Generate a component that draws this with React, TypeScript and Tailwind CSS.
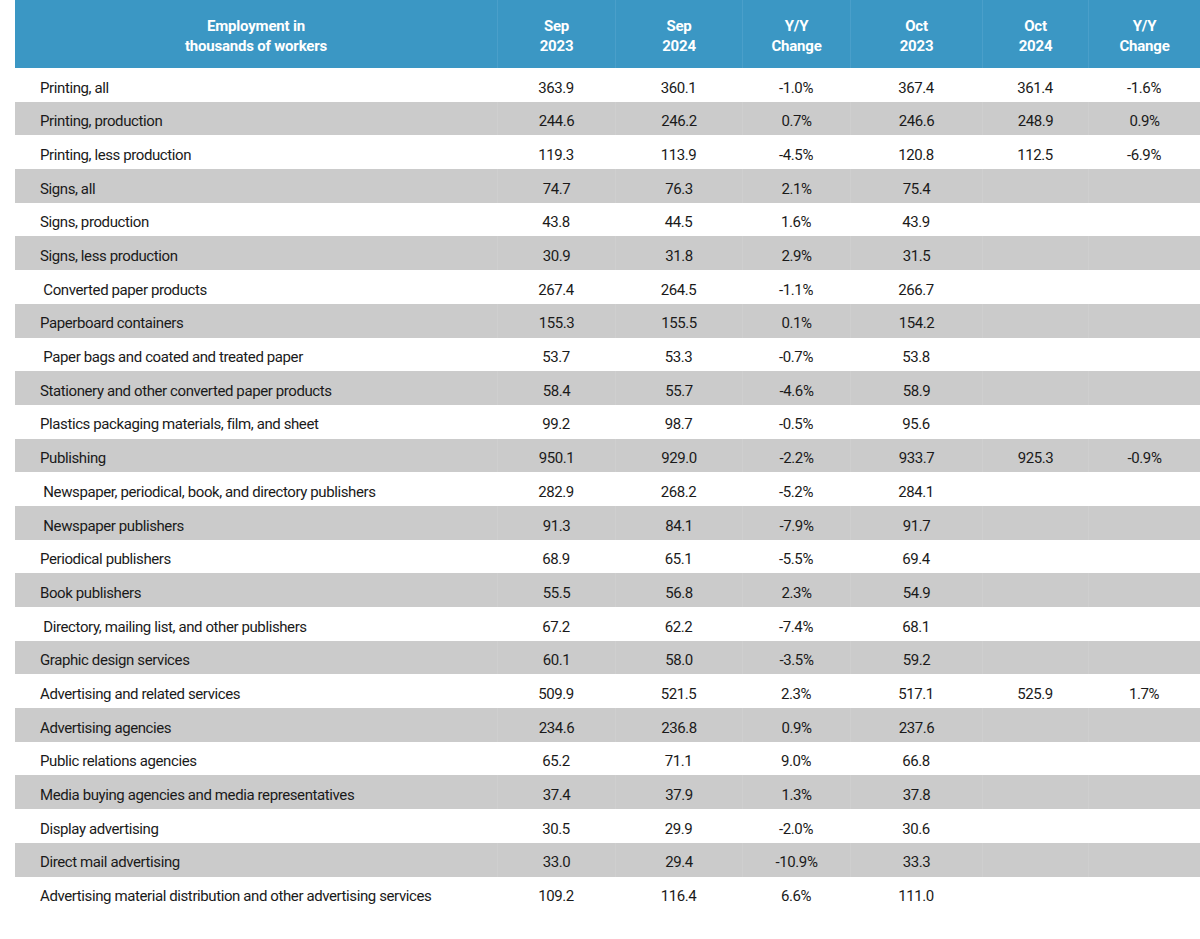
import React from "react";

type Row = [string, string, string, string, string, string, string];

const rows: Row[] = [
  ["Printing, all", "363.9", "360.1", "-1.0%", "367.4", "361.4", "-1.6%"],
  ["Printing, production", "244.6", "246.2", "0.7%", "246.6", "248.9", "0.9%"],
  ["Printing, less production", "119.3", "113.9", "-4.5%", "120.8", "112.5", "-6.9%"],
  ["Signs, all", "74.7", "76.3", "2.1%", "75.4", "", ""],
  ["Signs, production", "43.8", "44.5", "1.6%", "43.9", "", ""],
  ["Signs, less production", "30.9", "31.8", "2.9%", "31.5", "", ""],
  ["\u00a0Converted paper products", "267.4", "264.5", "-1.1%", "266.7", "", ""],
  ["Paperboard containers", "155.3", "155.5", "0.1%", "154.2", "", ""],
  ["\u00a0Paper bags and coated and treated paper", "53.7", "53.3", "-0.7%", "53.8", "", ""],
  ["Stationery and other converted paper products", "58.4", "55.7", "-4.6%", "58.9", "", ""],
  ["Plastics packaging materials, film, and sheet", "99.2", "98.7", "-0.5%", "95.6", "", ""],
  ["Publishing", "950.1", "929.0", "-2.2%", "933.7", "925.3", "-0.9%"],
  ["\u00a0Newspaper, periodical, book, and directory publishers", "282.9", "268.2", "-5.2%", "284.1", "", ""],
  ["\u00a0Newspaper publishers", "91.3", "84.1", "-7.9%", "91.7", "", ""],
  ["Periodical publishers", "68.9", "65.1", "-5.5%", "69.4", "", ""],
  ["Book publishers", "55.5", "56.8", "2.3%", "54.9", "", ""],
  ["\u00a0Directory, mailing list, and other publishers", "67.2", "62.2", "-7.4%", "68.1", "", ""],
  ["Graphic design services", "60.1", "58.0", "-3.5%", "59.2", "", ""],
  ["Advertising and related services", "509.9", "521.5", "2.3%", "517.1", "525.9", "1.7%"],
  ["Advertising agencies", "234.6", "236.8", "0.9%", "237.6", "", ""],
  ["Public relations agencies", "65.2", "71.1", "9.0%", "66.8", "", ""],
  ["Media buying agencies and media representatives", "37.4", "37.9", "1.3%", "37.8", "", ""],
  ["Display advertising", "30.5", "29.9", "-2.0%", "30.6", "", ""],
  ["Direct mail advertising", "33.0", "29.4", "-10.9%", "33.3", "", ""],
  ["Advertising material distribution and other advertising services", "109.2", "116.4", "6.6%", "111.0", "", ""],
];

const widths = ["w-[482px]", "w-[118px]", "w-[127px]", "w-[108px]", "w-[132px]", "w-[106px]", "w-[112px]"];

const headers: [string, string][] = [
  ["Employment in", "thousands of workers"],
  ["Sep", "2023"],
  ["Sep", "2024"],
  ["Y/Y", "Change"],
  ["Oct", "2023"],
  ["Oct", "2024"],
  ["Y/Y", "Change"],
];

export default function App() {
  return (
    <div
      className="w-[1200px] h-[939px] bg-white pl-[15px] text-[#1a1a1a]"
      style={{ fontFamily: "Roboto, 'Liberation Sans', sans-serif" }}
    >
      <div className="flex h-[68px] bg-[#3b97c4]">
        {headers.map((h, i) => (
          <div
            key={i}
            className={`${widths[i]} flex flex-col items-center justify-center pt-[3px] text-white font-bold text-[15px] leading-[20px] tracking-[-0.2px] ${
              i > 0 ? "border-l border-[#4a9fca]" : ""
            }`}
          >
            <span>{h[0]}</span>
            <span>{h[1]}</span>
          </div>
        ))}
      </div>
      {rows.map((r, ri) => (
        <div key={ri} className={`flex h-[33.7px] ${ri % 2 === 1 ? "bg-[#cbcbcb]" : "bg-white"}`}>
          {r.map((c, ci) => (
            <div
              key={ci}
              className={`${widths[ci]} flex items-center pt-[6px] text-[15px] tracking-[-0.4px] whitespace-pre ${
                ci === 0 ? "pl-[25px]" : "justify-center"
              } ${ci > 0 && ri % 2 === 1 ? "border-l border-[#cfcfcf]" : ""}`}
            >
              {c}
            </div>
          ))}
        </div>
      ))}
    </div>
  );
}
